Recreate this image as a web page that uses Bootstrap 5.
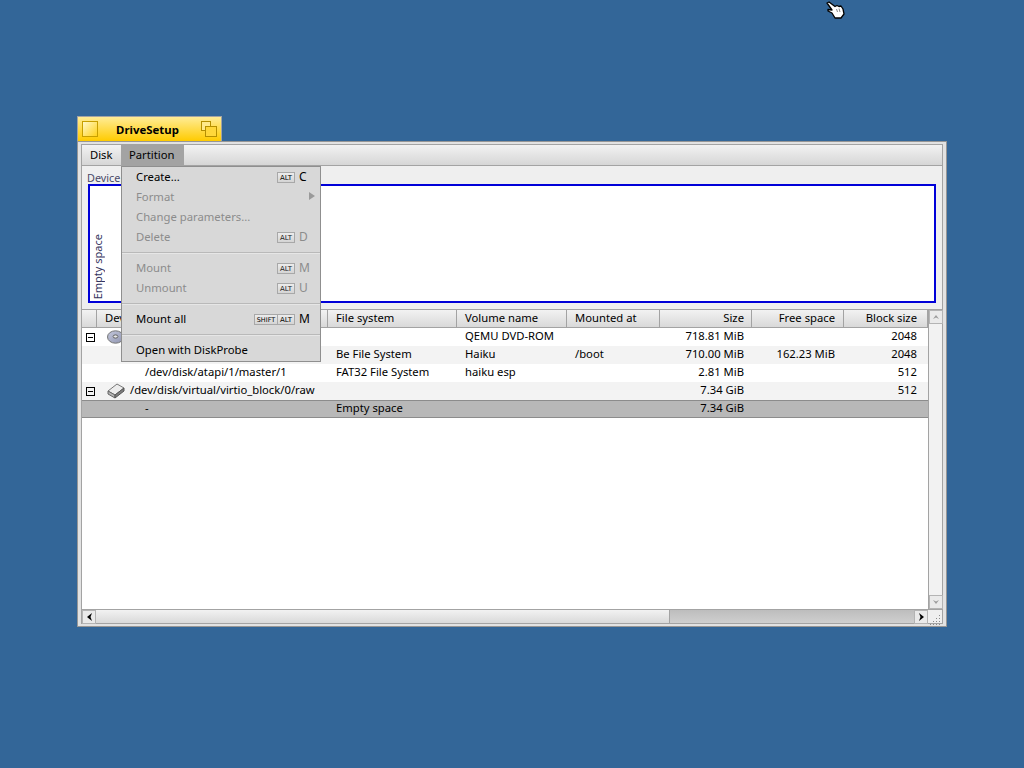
<!DOCTYPE html>
<html lang="en">
<head>
    <meta charset="UTF-8">
    <title>DriveSetup</title>
    <link href="https://cdn.jsdelivr.net/npm/bootstrap@5.3.0/dist/css/bootstrap.min.css" rel="stylesheet">
    <style>
        html, body { height: 100%; }
        body { background: #336698; font: 11.25px/18px "Noto Sans", sans-serif; color: #000; overflow: hidden; }

        /* desktop */
        .cursor { position: absolute; left: 826px; top: 1px; }
        .app { position: absolute; left: 77px; top: 116px; width: 870px; }

        /* window tab */
        .win-tab { width: 145px; height: 25px; padding: 4px 4px 0 4px; background: linear-gradient(#ffec96, #ffcb00); border: 1px solid #a3a3a3; border-bottom: 0; }
        .win-tab b { font-size: 11.4px; line-height: 17px; margin-right: 4px; }
        .close-btn { width: 16px; height: 16px; border: 1px solid #c79f00; background: linear-gradient(135deg, #fff8c8, #ffd21c); }
        .zoom-btn { position: relative; width: 16px; height: 16px; }
        .zoom-btn i { position: absolute; display: block; border: 1px solid #b58f00; }
        .zoom-btn i:first-child { left: 0; top: 0; width: 10px; height: 10px; background: #ffe98a; }
        .zoom-btn i:last-child { left: 4px; top: 5px; width: 12px; height: 11px; background: #ffd73a; }

        /* window frame */
        .win-frame { height: 486px; padding: 2px 3px; background: #e2e2e2; border: 1px solid #969696; }
        .win-body { height: 480px; background: #d8d8d8; border: 1px solid #a3a3a3; }

        .menubar { height: 21px; flex: none; background: linear-gradient(#f2f2f2, #d6d6d6); border-bottom: 1px solid #a3a3a3; }
        .menubar span { padding: 0 8px; height: 20px; line-height: 19px; }
        .menubar .disk { width: 39px; }
        .menubar .open { width: 63px; background: #a3a3a3; }

        .parts { height: 143px; flex: none; padding: 2px 6px 0; background: #efefef; }
        .parts .lbl { height: 16px; padding-left: 0; line-height: 19px; font-size: 10.8px; color: #4a4a68; margin-left: -1px; }
        .map { height: 119px; background: #fff; border: 2px solid #0000d8; padding: 0 0 2px 1px; }
        .map span { writing-mode: vertical-rl; transform: rotate(180deg); font-size: 11px; line-height: 14px; color: #333360; }

        /* list */
        .list-row { height: 300px; flex: none; }
        .list-pane { width: 846px; background: #fff; }
        .head { height: 19px; background: linear-gradient(#f2f2f2, #d9d9d9); border-top: 1px solid #a3a3a3; border-bottom: 1px solid #a3a3a3; }
        .head div { height: 17px; line-height: 16px; padding: 0 10px 0 8px; border-right: 1px solid #a3a3a3; flex: none; white-space: nowrap; overflow: hidden; }
        .row-line { height: 18px; }
        .row-line div { flex: none; padding: 0 10px 0 8px; line-height: 16px; white-space: nowrap; }
        .row-line.alt { background: #f3f3f3; }
        .row-line.sel { background: #b8b8b8; border-top: 1px solid #8c8c8c; border-bottom: 1px solid #8c8c8c; }
        .row-line.sel div { line-height: 14px; }
        .c-dev { width: 246px; position: relative; }
        .c-fs { width: 129px; } .c-vol { width: 110px; } .c-mnt { width: 93px; }
        .c-size { width: 92px; } .c-free { width: 92px; } .c-blk { width: 84px; }
        .row-line .c-size { padding-right: 8px; }
        .row-line .c-free { padding-right: 9px; }
        .row-line .c-blk { padding-right: 11px; }
        .head .c-size { padding-right: 7px; }
        .head .c-free { padding-right: 8px; }
        .head .c-lead { width: 15px; padding: 0; }
        .head .c-dev { width: 231px; }
        .tree { position: absolute; left: 4px; top: 5px; width: 9px; height: 9px; border: 1px solid #000; }
        .tree::after { content: ""; position: absolute; left: 1px; top: 3px; width: 5px; height: 1px; background: #000; }
        .dev-ico { position: absolute; left: 25px; top: 1px; }
        .dev-txt { position: absolute; left: 48px; top: 0; }
        .part-txt { position: absolute; left: 63px; top: 0; }
        .speck { position: absolute; left: 47px; top: 13px; width: 3px; height: 2px; background: #444; }

        /* scrollbars */
        .vbar { width: 14px; background: #f2f2f2; border-left: 1px solid #a3a3a3; border-top: 1px solid #a3a3a3; }
        .hbar { height: 14px; flex: none; border-top: 1px solid #a3a3a3; }
        .sb-btn { flex: none; width: 14px; height: 14px; display: flex; align-items: center; justify-content: center; background: #eaeaea; border: 1px solid #b4b4b4; }
        .hthumb { width: 574px; background: linear-gradient(#f2f2f2, #d9d9d9); border-right: 1px solid #a3a3a3; }
        .htrack { background: linear-gradient(#bdbdbd, #cfcfcf); }
        .resize { width: 14px; background: #efefef; }

        /* open menu */
        .popup { position: absolute; left: 44px; top: 50px; width: 200px; height: 196px; padding-top: 1px; background: #d8d8d8; border: 1px solid #8f8f8f; }
        .popup .item { height: 20px; line-height: 18px; padding: 0 5px 0 14px; font-size: 11.3px; }
        .popup .item > span:last-child { height: 18px; }
        .popup .off { color: #8c8c8c; }
        .popup hr { margin: 4px 0 5px; height: 2px; border: 0; opacity: 1; background: #b9b9b9; border-bottom: 1px solid #e6e6e6; }
        .popup .key { width: 16px; margin-left: 4px; text-align: left; font-size: 12px; }
        kbd { display: inline-block; height: 11px; padding: 0; width: 18px; text-align: center; font: 7px/10px "DejaVu Sans", sans-serif; color: #000; background: linear-gradient(#ececec, #d4d4d4); border: 1px solid #a8a8a8; border-radius: 0; box-shadow: none; }
        kbd.wide { width: 24px; margin-right: -1px; font-size: 6.5px; }
        .popup .off kbd { color: #222; }
    </style>
</head>
<body>

<!-- cursor -->
<svg class="cursor" width="19" height="18" viewBox="0 0 19 18">
    <path d="M1 2 L3 1 L9 5.5 L11 4.5 L13 5.5 L15 5 L17 8 L18 13 L15 17 L9 17 L6 12 L2 10 L2 8.5 L6 9 Z" fill="#fff" stroke="#000" stroke-width="1.3" stroke-linejoin="round"/>
    <path d="M10.5 8 L11.5 11 M13 7.5 L14 11" stroke="#888" fill="none"/>
</svg>

<div class="app">
    <div class="win-tab d-flex align-items-start justify-content-between">
        <div class="close-btn"></div>
        <b>DriveSetup</b>
        <div class="zoom-btn"><i></i><i></i></div>
    </div>

    <div class="win-frame">
        <div class="win-body d-flex flex-column">
            <div class="menubar d-flex">
                <span class="disk">Disk</span>
                <span class="open">Partition</span>
            </div>

            <div class="parts">
                <div class="lbl">Device</div>
                <div class="map d-flex align-items-end"><span>Empty space</span></div>
            </div>

            <div class="list-row d-flex">
                <div class="list-pane">
                    <div class="head d-flex">
                        <div class="c-lead"></div>
                        <div class="c-dev">Dev</div>
                        <div class="c-fs">File system</div>
                        <div class="c-vol">Volume name</div>
                        <div class="c-mnt">Mounted at</div>
                        <div class="c-size text-end">Size</div>
                        <div class="c-free text-end">Free space</div>
                        <div class="c-blk text-end">Block size</div>
                    </div>

                    <div class="row-line d-flex">
                        <div class="c-dev">
                            <span class="tree"></span>
                            <svg class="dev-ico" width="18" height="16" viewBox="0 0 18 16">
                                <defs><linearGradient id="cd" x1="0" y1="0" x2="1" y2="1"><stop offset="0" stop-color="#c4c8dc"/><stop offset="1" stop-color="#8f94b0"/></linearGradient></defs>
                                <ellipse cx="8.5" cy="8" rx="8" ry="6.2" fill="url(#cd)" stroke="#777"/>
                                <ellipse cx="8.5" cy="7.5" rx="2.4" ry="1.6" fill="#e8e8e8" stroke="#666"/>
                            </svg>
                        </div>
                        <div class="c-fs"></div>
                        <div class="c-vol">QEMU DVD-ROM</div>
                        <div class="c-mnt"></div>
                        <div class="c-size text-end">718.81 MiB</div>
                        <div class="c-free"></div>
                        <div class="c-blk text-end">2048</div>
                    </div>
                    <div class="row-line alt d-flex">
                        <div class="c-dev"><span class="speck"></span></div>
                        <div class="c-fs">Be File System</div>
                        <div class="c-vol">Haiku</div>
                        <div class="c-mnt">/boot</div>
                        <div class="c-size text-end">710.00 MiB</div>
                        <div class="c-free text-end">162.23 MiB</div>
                        <div class="c-blk text-end">2048</div>
                    </div>
                    <div class="row-line d-flex">
                        <div class="c-dev"><span class="part-txt">/dev/disk/atapi/1/master/1</span></div>
                        <div class="c-fs">FAT32 File System</div>
                        <div class="c-vol">haiku esp</div>
                        <div class="c-mnt"></div>
                        <div class="c-size text-end">2.81 MiB</div>
                        <div class="c-free"></div>
                        <div class="c-blk text-end">512</div>
                    </div>
                    <div class="row-line alt d-flex">
                        <div class="c-dev">
                            <span class="tree"></span>
                            <svg class="dev-ico" width="18" height="16" viewBox="0 0 18 16">
                                <path d="M1 8 L10 1 L17 5 L8 12Z" fill="#ececec" stroke="#777"/>
                                <path d="M1 8 L8 12 L8 15 L1 11Z" fill="#b4b4b4" stroke="#666"/>
                                <path d="M8 12 L17 5 L17 8 L8 15Z" fill="#7e7e7e" stroke="#555"/>
                            </svg>
                            <span class="dev-txt">/dev/disk/virtual/virtio_block/0/raw</span>
                        </div>
                        <div class="c-fs"></div>
                        <div class="c-vol"></div>
                        <div class="c-mnt"></div>
                        <div class="c-size text-end">7.34 GiB</div>
                        <div class="c-free"></div>
                        <div class="c-blk text-end">512</div>
                    </div>
                    <div class="row-line sel d-flex">
                        <div class="c-dev"><span class="part-txt">-</span></div>
                        <div class="c-fs">Empty space</div>
                        <div class="c-vol"></div>
                        <div class="c-mnt"></div>
                        <div class="c-size text-end">7.34 GiB</div>
                        <div class="c-free"></div>
                        <div class="c-blk"></div>
                    </div>
                </div>

                <div class="vbar d-flex flex-column justify-content-between">
                    <div class="sb-btn"><svg width="8" height="6"><path d="M4 1 L7 5 L4 3.5 L1 5Z" fill="#9a9a9a"/></svg></div>
                    <div class="sb-btn"><svg width="8" height="6"><path d="M4 5 L7 1 L4 2.5 L1 1Z" fill="#9a9a9a"/></svg></div>
                </div>
            </div>

            <div class="hbar d-flex">
                <div class="sb-btn"><svg width="7" height="8"><path d="M1 4 L6 0 L4.5 4 L6 8Z" fill="#000"/></svg></div>
                <div class="hthumb"></div>
                <div class="htrack flex-grow-1"></div>
                <div class="sb-btn"><svg width="7" height="8"><path d="M6 4 L1 0 L2.5 4 L1 8Z" fill="#000"/></svg></div>
                <div class="resize">
                    <svg width="14" height="13" fill="#8a8a8a">
                        <rect x="11" y="2" width="1" height="1"/>
                        <rect x="8" y="5" width="1" height="1"/><rect x="11" y="5" width="1" height="1"/>
                        <rect x="5" y="8" width="1" height="1"/><rect x="8" y="8" width="1" height="1"/><rect x="11" y="8" width="1" height="1"/>
                        <rect x="2" y="11" width="1" height="1"/><rect x="5" y="11" width="1" height="1"/><rect x="8" y="11" width="1" height="1"/><rect x="11" y="11" width="1" height="1"/>
                    </svg>
                </div>
            </div>
        </div>
    </div>

    <div class="popup">
        <div class="item d-flex justify-content-between"><span>Create...</span><span class="d-flex align-items-center"><kbd>ALT</kbd><span class="key">C</span></span></div>
        <div class="item off d-flex justify-content-between"><span>Format</span><svg class="mt-1" width="6" height="8"><path d="M0 0 L6 4 L0 8Z" fill="#9a9a9a"/></svg></div>
        <div class="item off"><span>Change parameters...</span></div>
        <div class="item off d-flex justify-content-between"><span>Delete</span><span class="d-flex align-items-center"><kbd>ALT</kbd><span class="key">D</span></span></div>
        <hr>
        <div class="item off d-flex justify-content-between"><span>Mount</span><span class="d-flex align-items-center"><kbd>ALT</kbd><span class="key">M</span></span></div>
        <div class="item off d-flex justify-content-between"><span>Unmount</span><span class="d-flex align-items-center"><kbd>ALT</kbd><span class="key">U</span></span></div>
        <hr>
        <div class="item d-flex justify-content-between"><span>Mount all</span><span class="d-flex align-items-center"><kbd class="wide">SHIFT</kbd><kbd>ALT</kbd><span class="key">M</span></span></div>
        <hr>
        <div class="item"><span>Open with DiskProbe</span></div>
    </div>
</div>

</body>
</html>
